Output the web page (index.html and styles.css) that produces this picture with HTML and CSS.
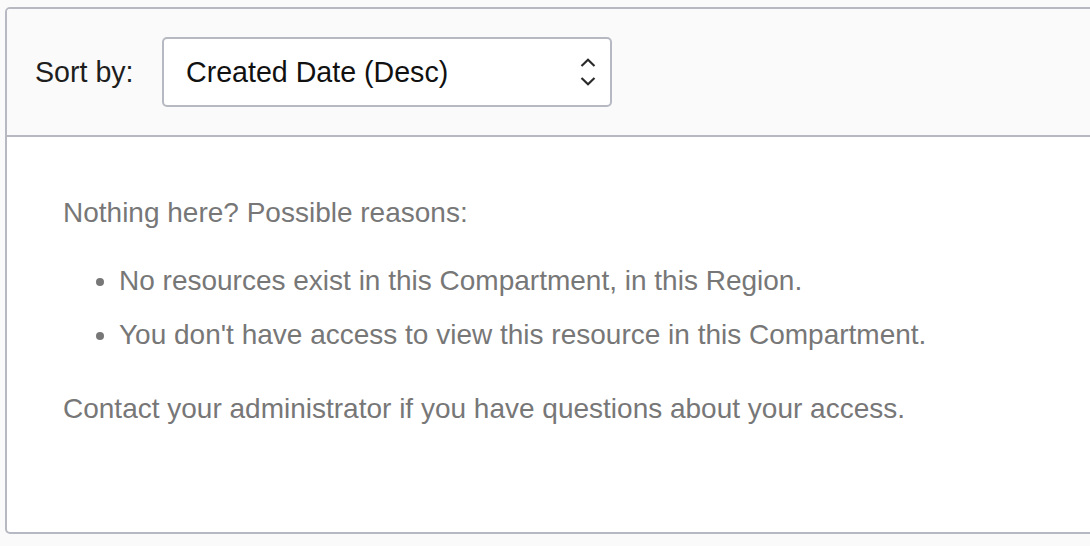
FILE: index.html
```html
<!DOCTYPE html>
<html>
<head>
<meta charset="utf-8">
<link rel="stylesheet" href="styles.css">
</head>
<body>
<div class="card">
  <div class="toolbar">
    <label class="sort-label">Sort by:</label>
    <div class="select">
      <span class="select-value">Created Date (Desc)</span>
      <svg class="chevrons" width="16" height="28" viewBox="0 0 16 28">
        <path d="M1.5 8 L8 1.8 L14.5 8" fill="none" stroke="#2a2a2a" stroke-width="2.2"/>
        <path d="M1.5 20 L8 26.2 L14.5 20" fill="none" stroke="#2a2a2a" stroke-width="2.2"/>
      </svg>
    </div>
  </div>
  <div class="empty">
    <p class="lead">Nothing here? Possible reasons:</p>
    <ul class="reasons">
      <li>No resources exist in this Compartment, in this Region.</li>
      <li>You don't have access to view this resource in this Compartment.</li>
    </ul>
    <p class="contact">Contact your administrator if you have questions about your access.</p>
  </div>
</div>
</body>
</html>
```

FILE: styles.css
```css
html, body {
  margin: 0;
  padding: 0;
  background: #fafafa;
  overflow: hidden;
  font-family: "Liberation Sans", Arial, sans-serif;
}
body {
  padding: 7px 0 0 5px;
}
.card {
  width: 1120px;
  height: 527px;
  box-sizing: border-box;
  border: 2px solid #b6b9c1;
  border-radius: 5px;
  background: #fff;
  overflow: hidden;
}
.toolbar {
  height: 128px;
  box-sizing: border-box;
  background: #fafafa;
  border-bottom: 2px solid #b6b9c1;
  display: flex;
  align-items: center;
  padding: 0 0 0 28px;
}
.sort-label {
  font-size: 28.6px;
  color: #1e1e1e;
  width: 127px;
}
.select {
  width: 450px;
  height: 70px;
  box-sizing: border-box;
  border: 2px solid #b6b9c1;
  border-radius: 5px;
  background: #fff;
  display: flex;
  align-items: center;
  padding: 0 14px 0 22px;
}
.select-value {
  flex: 1;
  font-size: 28.6px;
  color: #111;
}
.chevrons {
  display: block;
}
.empty {
  padding: 60px 0 0 56px;
  color: #777;
  font-size: 28px;
}
.lead {
  margin: 0;
  line-height: 32px;
}
.reasons {
  margin: 36px 0 0 0;
  padding: 0 0 0 56px;
}
.reasons li {
  line-height: 32px;
  margin-bottom: 22px;
}
.reasons li:last-child {
  margin-bottom: 0;
}
.contact {
  margin: 42px 0 0 0;
  line-height: 32px;
}
```
